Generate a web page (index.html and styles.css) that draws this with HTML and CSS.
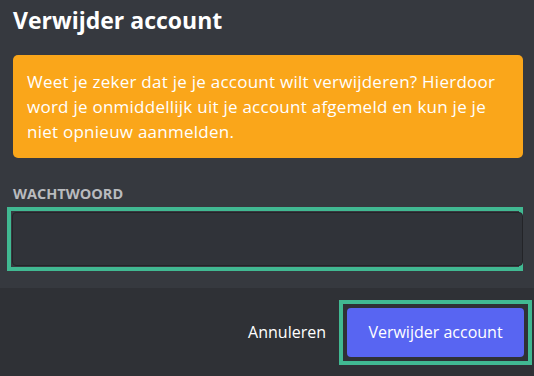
FILE: index.html
```html
<!DOCTYPE html>
<html lang="nl">
<head>
    <meta charset="UTF-8">
    <meta name="viewport" content="width=device-width, initial-scale=1.0">
    <title>Verwijder account</title>
    <link rel="stylesheet" href="styles.css">
</head>
<body>
    <div class="modal">
        <div class="inhoud">
            <h2 class="titel">Verwijder account</h2>
            <div class="waarschuwing">
                Weet je zeker dat je je account wilt verwijderen? Hierdoor word je onmiddellijk uit je account afgemeld en kun je je niet opnieuw aanmelden.
            </div>
            <label class="label" for="wachtwoord">Wachtwoord</label>
            <div class="focus-ring invoer-ring">
                <input class="invoer" id="wachtwoord" type="password">
            </div>
        </div>
        <div class="voettekst">
            <button class="knop-link">Annuleren</button>
            <div class="focus-ring knop-ring">
                <button class="knop-rood">Verwijder account</button>
            </div>
        </div>
    </div>
</body>
</html>
```

FILE: styles.css
```css
body {
    margin: 0;
    background-color: #36393f;
    font-family: 'Open Sans', 'Noto Sans', sans-serif;
    color: #fff;
}

.modal {
    width: 534px;
    height: 376px;
    display: flex;
    flex-direction: column;
}

.inhoud {
    flex: 1;
    padding: 4px 11px 0 13px;
}

.titel {
    margin: 0;
    font-size: 23px;
    font-weight: 700;
    line-height: 32px;
}

.waarschuwing {
    margin-top: 19px;
    background-color: #faa61a;
    border-radius: 5px;
    padding: 14px 12px 14px 14px;
    font-size: 17px;
    letter-spacing: 0.25px;
    line-height: 25px;
}

.label {
    display: block;
    margin-top: 27px;
    font-size: 14.5px;
    font-weight: 700;
    line-height: 18px;
    text-transform: uppercase;
    color: #b9bbbe;
}

/* focus-rand zoals in de screenshot: hoekig, los van het element */
.focus-ring {
    border: 4px solid #41b992;
}

.invoer-ring {
    margin: 4px 0 0 -6px;
    padding: 1px 2px 1px 1px;
}

.invoer {
    display: block;
    box-sizing: border-box;
    width: 511px;
    height: 54px;
    margin: 0;
    background-color: #303339;
    border: 1px solid #232428;
    border-radius: 4px;
    outline: none;
}

.voettekst {
    height: 88px;
    background-color: #2f3136;
    display: flex;
    align-items: center;
    justify-content: flex-end;
    padding-right: 2px;
    gap: 13px;
}

.knop-ring {
    padding: 4px;
}

.knop-link {
    background: none;
    border: none;
    padding: 0;
    font-family: inherit;
    font-size: 16px;
    color: #fff;
}

.knop-rood {
    display: block;
    width: 177px;
    height: 49px;
    background-color: #5865f2;
    border: none;
    border-radius: 4px;
    font-family: inherit;
    font-size: 16px;
    color: #fff;
}
```
